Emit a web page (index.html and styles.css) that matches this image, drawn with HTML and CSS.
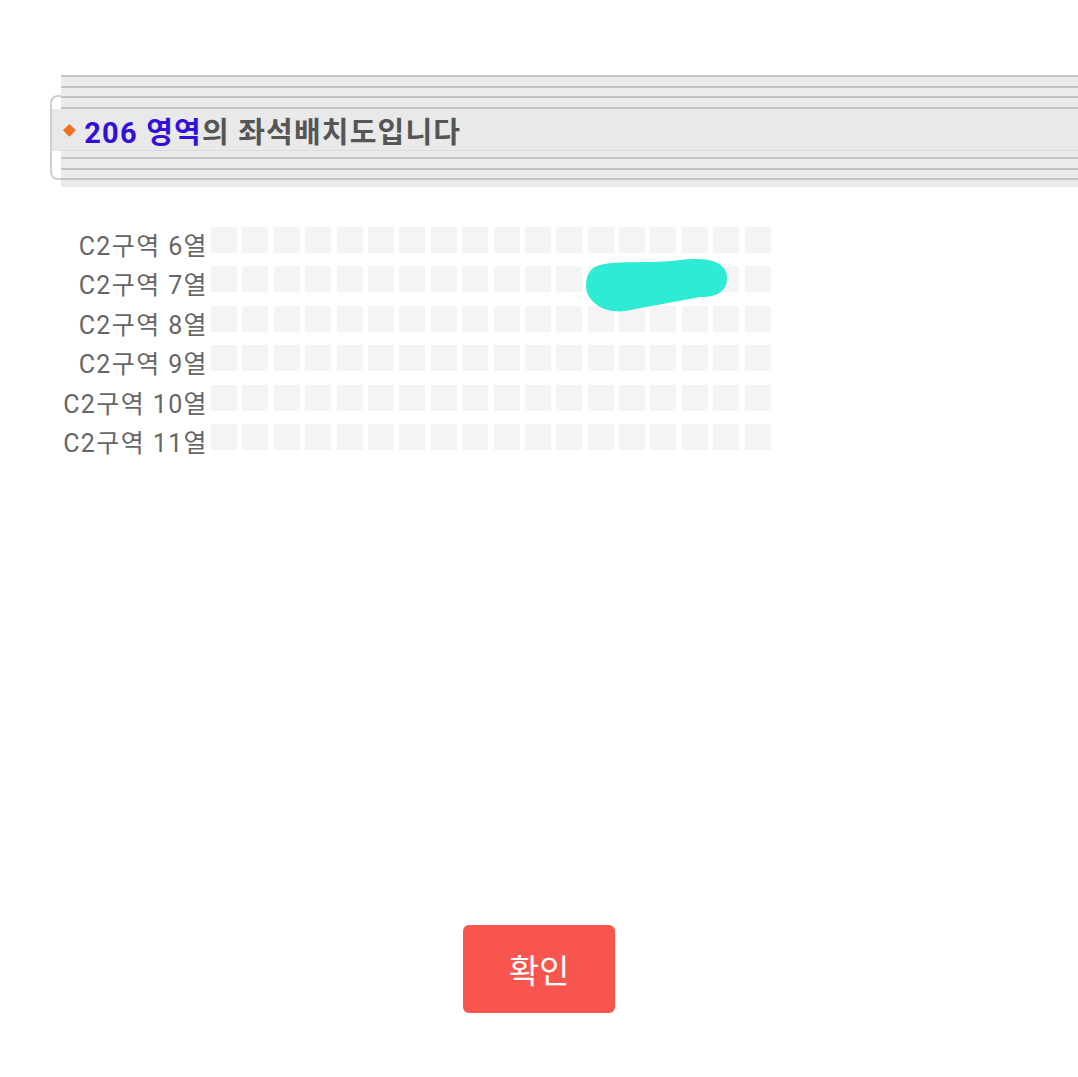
FILE: index.html
```html
<html>
<head>
    <meta charset="utf-8">
    <title>좌석배치도</title>
    <link rel="stylesheet" href="styles.css">
</head>
<body>
    <div class="header">
        <div class="cap"></div>
        <div class="band">
            <div class="stripes top"></div>
            <div class="title-bar">
                <span class="bullet">&#9670;</span>
                <span class="area">206 영역</span><span class="title-rest">의 좌석배치도입니다</span>
            </div>
            <div class="stripes bottom"></div>
        </div>
    </div>

    <div class="seat-map">
        <div class="labels">
            <div class="label">C2구역 6열</div>
            <div class="label">C2구역 7열</div>
            <div class="label">C2구역 8열</div>
            <div class="label">C2구역 9열</div>
            <div class="label">C2구역 10열</div>
            <div class="label">C2구역 11열</div>
        </div>
        <div class="seats" id="seats">
            <!-- marker over the picked seats -->
            <svg class="marker" width="145" height="60" viewBox="584 254 145 60">
                <path d="M600 264 C620 259 650 263 680 259 C702 256 728 258 727 278 C727 292 712 297 700 296 C680 300 650 305 625 310 C605 313 586 301 586 285 C586 272 592 266 600 264 Z" fill="#2eebd5"/>
            </svg>
        </div>
    </div>

    <div class="actions">
        <button class="confirm">확인</button>
    </div>

    <script>
        // 6 rows x 18 seats
        const seats = document.getElementById('seats');
        for (let i = 0; i < 6 * 18; i++) {
            const s = document.createElement('div');
            s.className = 'seat';
            seats.appendChild(s);
        }
    </script>
</body>
</html>
```

FILE: styles.css
```css
body {
    margin: 0;
    padding: 0;
    background-color: #fff;
    font-family: Roboto, "Noto Sans CJK KR", sans-serif;
    color: #666;
}

.header {
    display: flex;
    margin-top: 75px;
    padding-left: 50px;
}

.cap {
    align-self: flex-start;
    margin-top: 20px;
    width: 9px;
    height: 81px;
    border: 2px solid #cfcfcf;
    border-right: none;
    border-radius: 8px 0 0 8px;
    background: linear-gradient(#fff 0 12px, #e9e9e9 12px 54px, #fff 54px);
}

.band {
    flex: 1;
    display: flex;
    flex-direction: column;
}

.stripes {
    background: repeating-linear-gradient(#c4c4c4 0 2px, #ebebeb 2px 10.6px);
}

.stripes.top {
    height: 34px;
}

.stripes.bottom {
    height: 36px;
    border-top: 1px solid #dcdcdc;
    background: repeating-linear-gradient(#ebebeb 0 6px, #c4c4c4 6px 8px, #ebebeb 8px 10.5px);
}

.title-bar {
    height: 41px;
    background-color: #e9e9e9;
    display: flex;
    align-items: center;
    font-size: 29px;
    font-weight: bold;
    color: #555;
    letter-spacing: 1.2px;
}

.bullet {
    color: #f07020;
    font-size: 13px;
    margin: 0 7px 0 2px;
}

.area {
    color: #3210d8;
}

.seat-map {
    display: flex;
    margin-top: 40px;
}

.labels {
    width: 208px;
    display: flex;
    flex-direction: column;
    gap: 13.4px;
}

.label {
    height: 26px;
    line-height: 26px;
    margin-top: 7px;
    margin-bottom: -7px;
    text-align: right;
    font-size: 25px;
    letter-spacing: 1.4px;
    color: #666;
    white-space: nowrap;
}

.seats {
    position: relative;
    margin-left: 3px;
    display: grid;
    grid-template-columns: repeat(18, 26px);
    grid-auto-rows: 26px;
    column-gap: 5.4px;
    row-gap: 13.4px;
}

.seat {
    background-color: #f4f4f4;
}

.marker {
    position: absolute;
    left: 373px;
    top: 28px;
    z-index: 1;
}

.actions {
    display: flex;
    justify-content: center;
    margin-top: 475px;
}

.confirm {
    width: 152px;
    height: 88px;
    background-color: #f9554f;
    color: #fff;
    border: none;
    border-radius: 6px;
    font-family: Roboto, "Noto Sans CJK KR", sans-serif;
    font-size: 33px;
    cursor: pointer;
}
```
